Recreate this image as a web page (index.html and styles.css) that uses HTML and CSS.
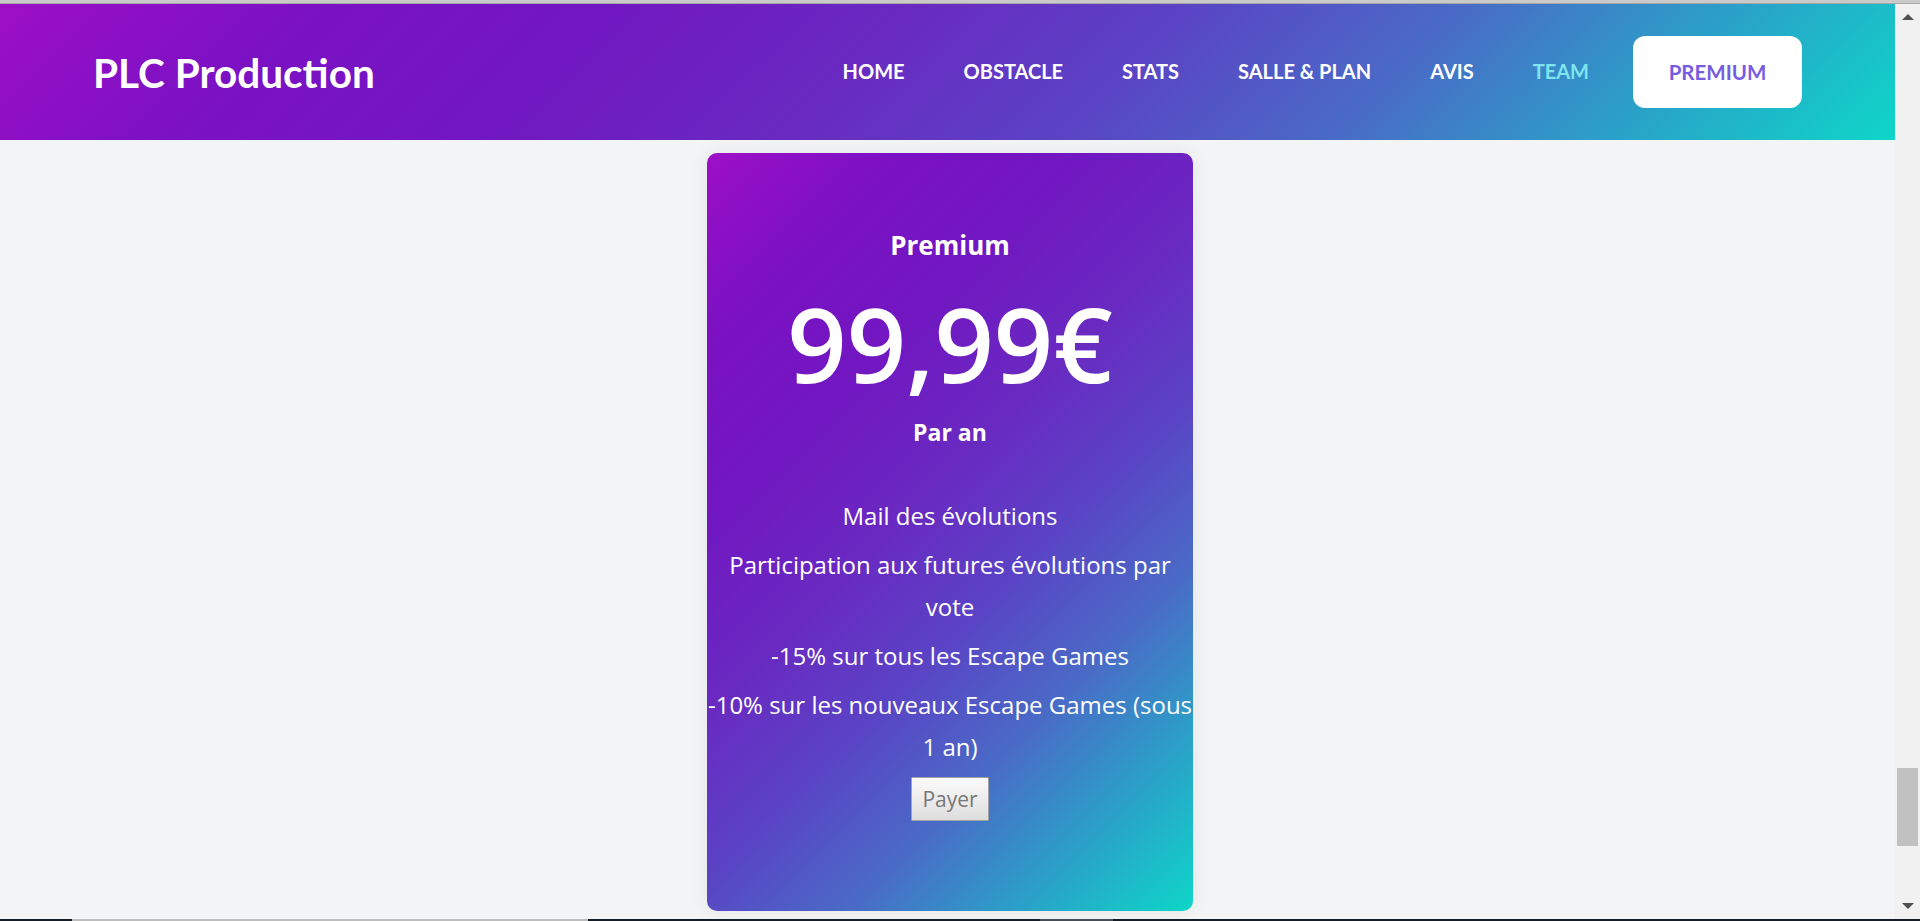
FILE: index.html
```html
<!DOCTYPE html>
<html lang="fr">
<head>
<meta charset="utf-8">
<title>PLC Production - Premium</title>
<link rel="stylesheet" href="styles.css">
</head>
<body>
<div class="topline"></div>
<div class="frame">
  <div class="page">
    <header class="site-header">
      <div class="logo">PLC Production</div>
      <nav class="nav">
        <ul class="nav-links">
          <li><a class="nav-link" href="#">HOME</a></li>
          <li><a class="nav-link" href="#">OBSTACLE</a></li>
          <li><a class="nav-link" href="#">STATS</a></li>
          <li><a class="nav-link" href="#">SALLE &amp; PLAN</a></li>
          <li><a class="nav-link" href="#">AVIS</a></li>
          <li><a class="nav-link nav-link-active" href="#">TEAM</a></li>
        </ul>
        <a class="nav-button" href="#">PREMIUM</a>
      </nav>
    </header>
    <main class="main">
      <section class="card">
        <h2 class="card-title">Premium</h2>
        <div class="card-price">99,99€</div>
        <h3 class="card-period">Par an</h3>
        <div class="card-features">
          <p class="feature">Mail des évolutions</p>
          <p class="feature">Participation aux futures évolutions par<br>vote</p>
          <p class="feature">-15% sur tous les Escape Games</p>
          <p class="feature">-10% sur les nouveaux Escape Games (sous<br>1 an)</p>
        </div>
        <button class="pay-button" type="button">Payer</button>
      </section>
    </main>
  </div>
  <div class="scrollbar">
    <div class="scroll-arrow"><span class="tri-up"></span></div>
    <div class="scroll-track"><div class="scroll-thumb"></div></div>
    <div class="scroll-arrow"><span class="tri-down"></span></div>
  </div>
</div>
<div class="taskbar">
  <div class="seg seg-dark seg-a"></div>
  <div class="seg seg-light seg-b"></div>
  <div class="seg seg-dark seg-c"></div>
  <div class="seg seg-mid seg-d"></div>
  <div class="seg seg-dark seg-e"></div>
</div>
</body>
</html>
```
FILE: styles.css
```css
* {
  box-sizing: border-box;
}

html, body {
  margin: 0;
  padding: 0;
  width: 1920px;
  height: 921px;
  overflow: hidden;
  background: #f3f4f6;
}

body {
  font-family: "Open Sans", "Liberation Sans", sans-serif;
  display: flex;
  flex-direction: column;
}

.topline {
  height: 4px;
  background: #cacaca;
  border-bottom: 1px solid #a6a6a6;
  flex: none;
}

.frame {
  height: 915px;
  display: flex;
  flex: none;
}

.page {
  flex: 1;
  overflow: hidden;
  background: #f3f4f6;
  display: flex;
  flex-direction: column;
}

/* Header */
.site-header {
  height: 136px;
  flex: none;
  padding: 0 93px;
  display: flex;
  align-items: center;
  justify-content: space-between;
  background: linear-gradient(135deg,
    #9d0fc7 0%,
    #7b11c3 15%,
    #7117c1 30%,
    #692ac1 45%,
    #5b42c5 58%,
    #4a6ac6 72%,
    #2c9ec8 85%,
    #0ed6c8 100%);
}

.logo {
  font-family: "Lato", "Liberation Sans", sans-serif;
  font-weight: 700;
  font-size: 40.5px;
  color: #ffffff;
  line-height: 1;
  padding-top: 2px;
}

.nav {
  display: flex;
  align-items: center;
  gap: 44px;
}

.nav-links {
  list-style: none;
  margin: 0;
  padding: 0;
  display: flex;
  gap: 59px;
}

.nav-link {
  font-family: "Lato", "Liberation Sans", sans-serif;
  font-weight: 700;
  font-size: 20px;
  color: #ffffff;
  text-decoration: none;
  line-height: 1;
}

.nav-link-active {
  color: #7fe4ee;
}

.nav-button {
  display: flex;
  align-items: center;
  justify-content: center;
  width: 169px;
  height: 72px;
  background: #ffffff;
  border-radius: 12px;
  font-family: "Lato", "Liberation Sans", sans-serif;
  font-weight: 700;
  font-size: 20.5px;
  color: #765ce0;
  text-decoration: none;
}

/* Main */
.main {
  flex: 1;
  display: flex;
  justify-content: center;
  align-items: flex-start;
  padding: 13px 0 0 5px;
}

.card {
  width: 486px;
  flex: none;
  border-radius: 10px;
  padding: 74px 0 90px;
  display: flex;
  flex-direction: column;
  align-items: center;
  color: #ffffff;
  text-align: center;
  box-shadow: 0 0 18px rgba(0, 0, 0, 0.07);
  background: linear-gradient(135deg,
    #9d0fc7 0%,
    #7b11c3 15%,
    #7117c1 30%,
    #692ac1 45%,
    #5b42c5 58%,
    #4a6ac6 72%,
    #2c9ec8 85%,
    #0ed6c8 100%);
}

.card-title {
  margin: 0;
  font-size: 26px;
  font-weight: 700;
  line-height: 36px;
}

.card-price {
  margin-top: 28px;
  font-size: 104px;
  font-weight: 600;
  line-height: 104px;
}

.card-period {
  margin: 21px 0 0;
  font-size: 23px;
  font-weight: 700;
  line-height: 32px;
}

.card-features {
  margin-top: 47px;
  width: 100%;
  display: flex;
  flex-direction: column;
  align-items: center;
  gap: 7px;
}

.feature {
  margin: 0;
  font-size: 24px;
  line-height: 42px;
  white-space: nowrap;
}

.pay-button {
  margin-top: 9px;
  width: 78px;
  height: 44px;
  padding: 0;
  font-family: "Open Sans", "Liberation Sans", sans-serif;
  font-size: 21px;
  color: #787878;
  border: 1px solid #a3a3a3;
  border-radius: 1px;
  background: linear-gradient(#fbfbfb, #dddddd);
}

/* Fake scrollbar */
.scrollbar {
  width: 25px;
  flex: none;
  background: #f1f1f1;
  display: flex;
  flex-direction: column;
}

.scroll-arrow {
  height: 26px;
  display: flex;
  align-items: center;
  justify-content: center;
  flex: none;
}

.tri-up {
  width: 0;
  height: 0;
  border-left: 6px solid transparent;
  border-right: 6px solid transparent;
  border-bottom: 6px solid #505050;
}

.tri-down {
  width: 0;
  height: 0;
  border-left: 6px solid transparent;
  border-right: 6px solid transparent;
  border-top: 6px solid #505050;
}

.scroll-track {
  flex: 1;
  padding: 0 2px;
}

.scroll-thumb {
  margin-top: 738px;
  height: 78px;
  background: #c1c1c1;
}

/* Bottom strip */
.taskbar {
  height: 2px;
  flex: none;
  display: flex;
}

.seg {
  height: 2px;
}

.seg-dark { background: #141d25; }
.seg-light { background: #bdbdbd; }
.seg-mid { background: #474d54; }

.seg-a { width: 72px; }
.seg-b { width: 516px; }
.seg-c { width: 452px; }
.seg-d { width: 73px; }
.seg-e { flex: 1; }
```
